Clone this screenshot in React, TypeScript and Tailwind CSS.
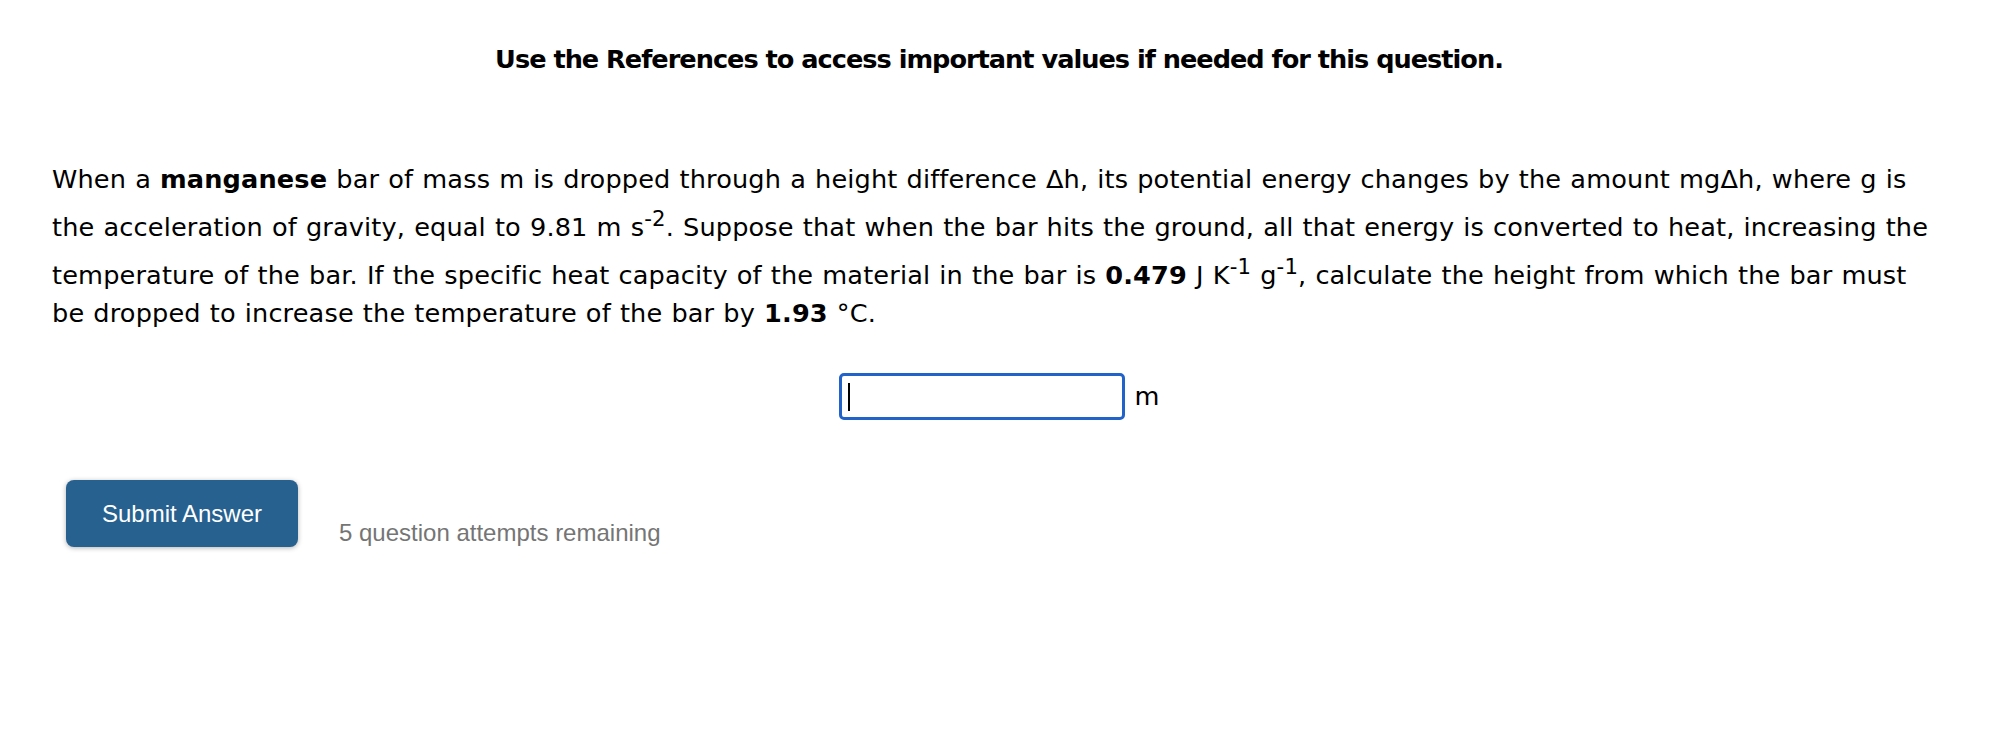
import React from "react";

const bodyFont = { fontFamily: '"DejaVu Sans", Verdana, sans-serif' };

function Sup({ children }: { children: React.ReactNode }) {
  return <sup className="static align-super text-[0.83em] leading-[inherit]">{children}</sup>;
}

export default function App() {
  return (
    <div className="min-h-screen bg-white text-black" style={bodyFont}>
      <h2 className="pt-[40px] text-center text-[25.6px] font-bold leading-[38px] tracking-[-1px]">
        Use the References to access important values if needed for this question.
      </h2>

      <p className="mt-[82px] px-[52px] text-[25.6px] leading-[39px] tracking-[0.14px] [word-spacing:0.8px]">
        When a <b>manganese</b> bar of mass m is dropped through a height difference Δh, its
        potential energy changes by the amount mgΔh, where g is the acceleration of gravity,
        equal to 9.81 m s<Sup>-2</Sup>. Suppose that when the bar hits the ground, all that
        energy is converted to heat, increasing the temperature of the bar. If the specific heat
        capacity of the material in the bar is <b>0.479</b> J K<Sup>-1</Sup> g<Sup>-1</Sup>,
        calculate the height from which the bar must be dropped to increase the temperature of
        the bar by <b>1.93</b> °C.
      </p>

      <div className="mt-[40px] flex items-center justify-center gap-[10px]">
        <div className="flex h-[47px] w-[286px] items-center rounded-[5px] border-[3px] border-[#2163c9] bg-white pl-[6px]">
          <span className="h-[28px] w-[2px] bg-black" />
        </div>
        <span className="text-[25.6px]">m</span>
      </div>

      <div
        className="mt-[60px] flex items-end gap-[41px] pl-[66px]"
        style={{ fontFamily: '"Liberation Sans", Arial, sans-serif' }}
      >
        <button
          type="button"
          className="h-[67px] w-[232px] rounded-[8px] bg-[#266190] text-[24px] text-white shadow-[0_1px_5px_rgba(0,0,0,0.3)]"
        >
          Submit Answer
        </button>
        <span className="text-[24px] leading-[28px] text-[#757575]">
          5 question attempts remaining
        </span>
      </div>
    </div>
  );
}
